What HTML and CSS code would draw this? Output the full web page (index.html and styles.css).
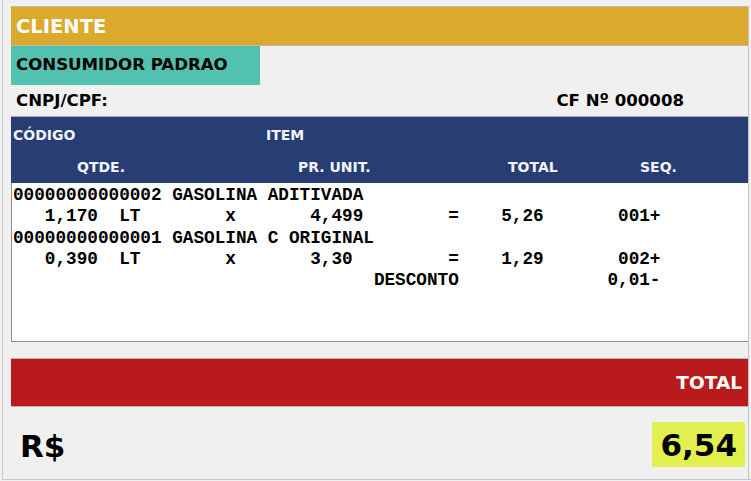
FILE: index.html
```html
<!DOCTYPE html>
<html lang="pt-BR">
<head>
<meta charset="utf-8">
<title>Cupom</title>
<link rel="stylesheet" href="styles.css">
</head>
<body>
<div class="window">
  <div class="panel">
    <div class="cliente">CLIENTE</div>
    <div class="consumidor-row"><div class="consumidor">CONSUMIDOR PADRAO</div></div>
    <div class="doc-row"><span>CNPJ/CPF:</span><span class="cf">CF Nº 000008</span></div>
    <div class="head">
      <div class="head-row head-row1"><span class="h-cod">CÓDIGO</span><span>ITEM</span></div>
      <div class="head-row head-row2"><span class="h-qtd">QTDE.</span><span class="h-pr">PR. UNIT.</span><span class="h-tot">TOTAL</span><span>SEQ.</span></div>
    </div>
    <pre class="list">00000000000002 GASOLINA ADITIVADA
   1,170  LT        x       4,499        =    5,26       001+
00000000000001 GASOLINA C ORIGINAL
   0,390  LT        x       3,30         =    1,29       002+
                                  DESCONTO              0,01-</pre>
    <div class="total-bar">TOTAL</div>
    <div class="total-row"><span class="rs">R$</span><span class="valor">6,54</span></div>
  </div>
</div>
</body>
</html>
```
FILE: styles.css
```css
html, body {
  margin: 0;
  padding: 0;
}
body {
  background: #f0f0f0;
  width: 751px;
  height: 481px;
  overflow: hidden;
  font-family: "DejaVu Sans", "Liberation Sans", sans-serif;
  font-weight: bold;
}
.window {
  margin-left: 2px;
  border-left: 1px solid #c9c9c9;
  border-bottom: 1px solid #c9c9c9;
  height: 473px;
  padding-top: 6px;
}
.panel {
  margin-left: 8px;
  width: 738px;
  height: 473px;
  border-top: 1px solid #b9b9b9;
  border-right: 1px solid #c4c4c4;
  box-sizing: border-box;
}
.cliente {
  height: 38px;
  background: #dba92c;
  border-bottom: 1px solid #b7b7b7;
  color: #ffffff;
  font-size: 19.5px;
  line-height: 40px;
  padding-left: 5px;
}
.consumidor-row {
  height: 39px;
  display: flex;
}
.consumidor {
  width: 244px;
  background: #52c1b0;
  color: #000;
  font-size: 16.6px;
  line-height: 38px;
  padding-left: 5px;
}
.doc-row {
  height: 31px;
  border-bottom: 1px solid #a9a9a9;
  display: flex;
  justify-content: space-between;
  align-items: center;
  padding: 0 64px 0 5px;
  font-size: 16.6px;
  color: #000;
}
.cf {
  padding-top: 0;
}
.head {
  height: 66px;
  background: #273d73;
  color: #f2f4ff;
  font-size: 14px;
  display: flex;
  flex-direction: column;
}
.head-row {
  height: 33px;
  display: flex;
  align-items: center;
}
.head-row1 {
  padding-left: 2px;
  padding-top: 2px;
}
.h-cod { width: 253px; }
.head-row2 {
  padding-left: 66px;
  padding-top: 1px;
}
.h-qtd { width: 221px; }
.h-pr { width: 210px; }
.h-tot { width: 132px; }
.list {
  margin: 0;
  height: 156px;
  background: #ffffff;
  border-left: 1px solid #8e8e8e;
  border-bottom: 1px solid #8e8e8e;
  padding: 2px 0 0 1px;
  font-family: "Liberation Mono", "Courier New", monospace;
  font-weight: bold;
  font-size: 17.7px;
  line-height: 21.3px;
  color: #000;
  overflow: hidden;
}
.total-bar {
  margin-top: 16px;
  height: 47px;
  border-top: 1px solid #b4b4b4;
  border-bottom: 1px solid #b4b4b4;
  background: #b91b1c;
  color: #ffffff;
  font-size: 18.5px;
  display: flex;
  align-items: center;
  justify-content: flex-end;
  padding-right: 6px;
}
.total-row {
  height: 71px;
  display: flex;
  justify-content: space-between;
  align-items: center;
  padding: 0 3px 0 9px;
}
.rs {
  font-size: 31px;
  color: #000;
  padding-top: 6px;
}
.valor {
  background: #e1ef4f;
  color: #000;
  font-size: 31px;
  height: 45px;
  line-height: 46px;
  padding: 0 8px 0 9px;
  margin-top: 4px;
}
```
